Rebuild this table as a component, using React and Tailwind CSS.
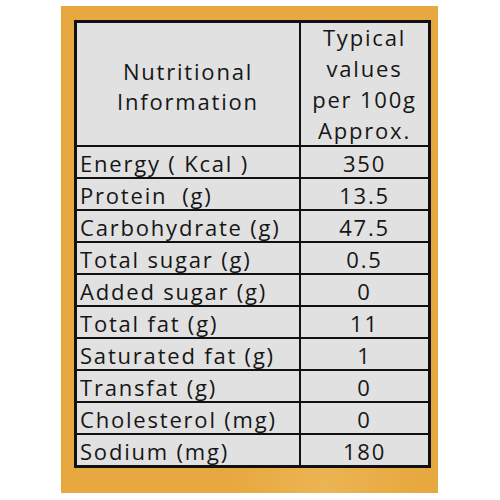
export default function App() {
  const rows = [
    ["Energy ( Kcal )", "350"],
    ["Protein  (g)", "13.5"],
    ["Carbohydrate (g)", "47.5"],
    ["Total sugar (g)", "0.5"],
    ["Added sugar (g)", "0"],
    ["Total fat (g)", "11"],
    ["Saturated fat (g)", "1"],
    ["Transfat (g)", "0"],
    ["Cholesterol (mg)", "0"],
    ["Sodium (mg)", "180"],
  ];
  return (
    <div className="w-[500px] h-[500px] bg-white" style={{ fontFamily: '"Open Sans", "Liberation Sans", sans-serif' }}>
      <div className="ml-[61px] pt-[6px]">
        <div className="w-[377px] h-[487px] bg-[#e7a93f] pl-[13px] pt-[14px] bg-[radial-gradient(ellipse_at_70%_100%,#ecb453_0,#e7a93f_25%),radial-gradient(circle_at_20%_20%,#e9ae48_0,#e7a93f_40%)]">
          <div className="w-[357px] bg-[#111] p-[3px] grid grid-cols-[222px_127px] gap-[2px] text-[#161616] text-[22px] tracking-[1.8px]">
            <div className="h-[122px] bg-[#e1e1e1] flex items-center justify-center text-center leading-[30px] pt-[3px]">
              <div>Nutritional<br />Information</div>
            </div>
            <div className="h-[122px] bg-[#e1e1e1] flex items-center justify-center text-center leading-[31px]">
              <div>Typical<br />values<br />per 100g<br />Approx.</div>
            </div>
            {rows.map(([a, b]) => (
              <>
                <div key={a} className="h-[30px] bg-[#e1e1e1] flex items-center pl-[3px] pt-[2px] leading-none whitespace-pre">{a}</div>
                <div key={a + "v"} className="h-[30px] bg-[#e1e1e1] flex items-center justify-center pt-[2px] leading-none">{b}</div>
              </>
            ))}
          </div>
        </div>
      </div>
    </div>
  );
}
